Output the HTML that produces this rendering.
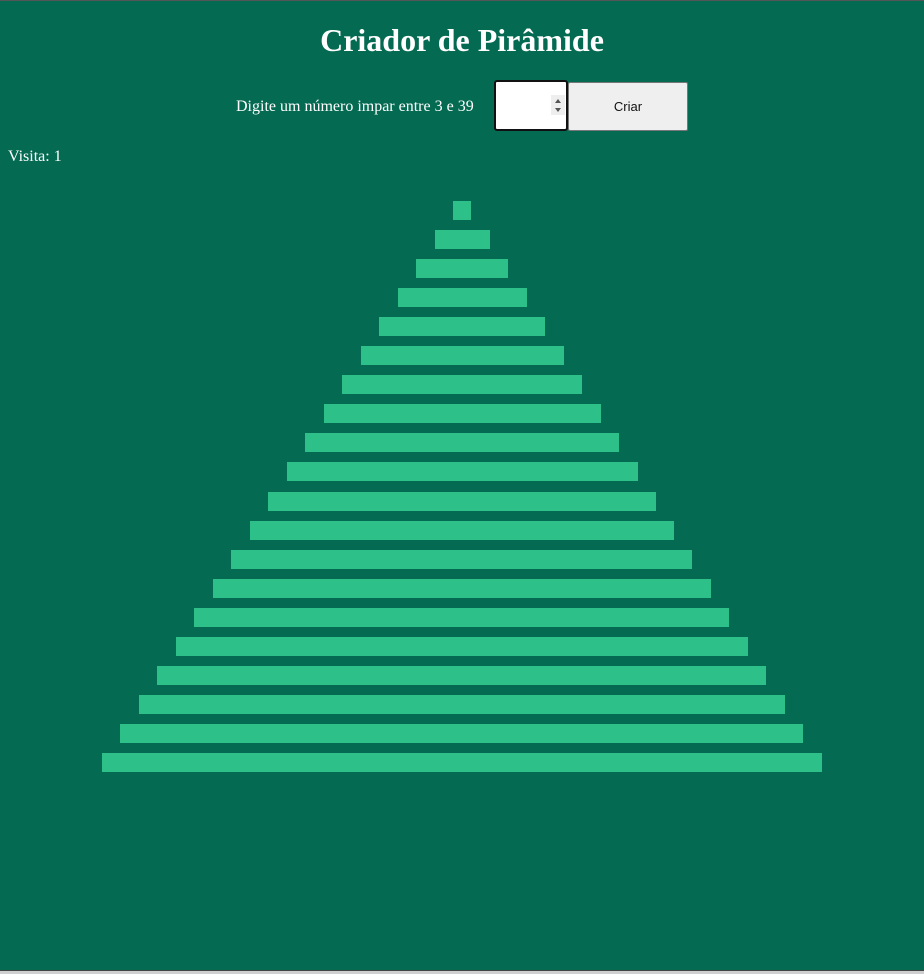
<!DOCTYPE html>
<html><head><meta charset="utf-8"><style>
html,body{margin:0;padding:0;}
body{width:924px;height:974px;background:#cfcfcf;position:relative;overflow:hidden;font-family:"Liberation Serif",serif;}
#main{position:absolute;left:0;top:1px;width:924px;height:969px;background:#056a52;}
#topline{position:absolute;left:0;top:0;width:924px;height:1px;background:#555;}
#botline{position:absolute;left:0;top:970px;width:924px;height:1px;background:#444;}
h1{position:absolute;top:20px;left:0;width:924px;text-align:center;margin:0;color:#fff;font-size:32px;font-weight:bold;line-height:40px;}
.lbl{position:absolute;left:236px;top:97px;color:#fff;font-size:16px;line-height:20px;}
.inp{position:absolute;left:494px;top:80px;background:#fff;border:2px solid #111;border-radius:3px;}
.spin{position:absolute;left:551px;top:95px;width:14px;height:20px;background:#eee;}
.btn{position:absolute;left:568px;top:82px;width:118px;height:47px;background:#efefef;border:1px solid #777;border-radius:2px;font-family:"Liberation Sans",sans-serif;font-size:13px;text-align:center;line-height:47px;color:#111;}
.vis{position:absolute;left:8px;top:147px;color:#fff;font-size:16px;line-height:20px;}
.bar{position:absolute;height:19px;background:#2dc189;}
</style></head><body>
<div id="topline"></div>
<div id="main"></div>
<div id="botline"></div>
<h1>Criador de Pirâmide</h1>
<div class="lbl">Digite um número impar entre 3 e 39</div>
<div class="inp" style="width:70px;height:47px"></div>
<div class="spin"><svg width="14" height="20"><path d="M4 8 L7 4 L10 8Z M4 13 L7 17 L10 13Z" fill="#555"/></svg></div>
<div class="btn">Criar</div>
<div class="vis">Visita: 1</div>
<div id="p"></div>
<script>
var h='';for(var i=0;i<20;i++){var w=18+36.95*i;var l=462-w/2;h+='<div class="bar" style="left:'+Math.round(l)+'px;width:'+Math.round(w)+'px;top:'+Math.round(201+29.05*i)+'px"></div>';}
document.getElementById('p').innerHTML=h;
</script>
</body></html>
